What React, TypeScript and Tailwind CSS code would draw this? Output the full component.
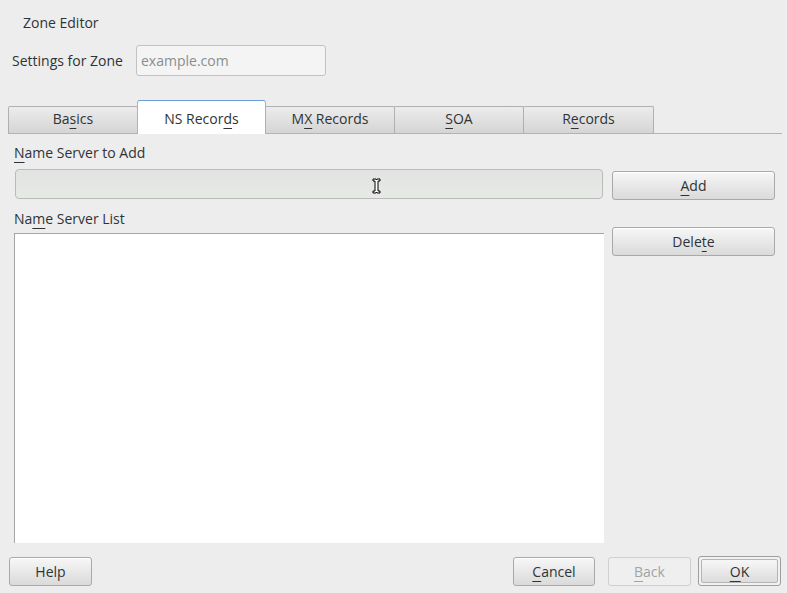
import React from "react";

const btn =
  "flex items-center justify-center rounded-[3px] border border-[#a9a9a9] bg-gradient-to-b from-[#f7f7f7] to-[#dadada] text-[14px] text-[#2e3436] shadow-[inset_0_1px_0_#ffffff]";

const Mn = ({ children }: { children: React.ReactNode }) => (
  <span className="underline decoration-1 underline-offset-[4px]">{children}</span>
);

const Tab = ({
  children,
  width,
  active,
}: {
  children: React.ReactNode;
  width: string;
  active?: boolean;
}) =>
  active ? (
    <div
      className={`${width} -mb-px -ml-px flex h-[34px] items-center justify-center rounded-t-[3px] border border-b-0 border-[#b0b0b0] border-t-[#6a9fd8] bg-white pt-[1px] text-[14px] text-[#2e3436]`}
    >
      <span>{children}</span>
    </div>
  ) : (
    <div
      className={`${width} -ml-px flex h-[27px] items-center justify-center rounded-t-[2px] border border-b-0 border-[#b0b0b0] bg-gradient-to-b from-[#ececec] to-[#d5d5d5] pb-[3px] text-[14px] text-[#2e3436] first:ml-0`}
    >
      <span>{children}</span>
    </div>
  );

const IBeam = () => (
  <svg width="9" height="16" viewBox="0 0 9 16" className="absolute left-[356px] top-[8px]">
    <path
      d="M1 1h3l0.5 1 0.5-1h3v2h-2v10h2v2h-3l-0.5-1-0.5 1h-3v-2h2v-10h-2z"
      fill="#ffffff"
      stroke="#000000"
      strokeWidth="1"
    />
  </svg>
);

export default function App() {
  return (
    <div
      className="flex h-[593px] w-[787px] flex-col overflow-hidden bg-[#ededed] text-[14px] text-[#2e3436]"
      style={{ fontFamily: '"Open Sans", "DejaVu Sans", sans-serif' }}
    >
      <div className="pl-[23px] pt-[13px] leading-[20px]">Zone Editor</div>

      <div className="mt-[12px] flex h-[31px] items-center pl-[12px]">
        <span className="w-[124px] leading-[20px]">Settings for Zone</span>
        <div className="flex h-[31px] w-[190px] items-center rounded-[3px] border border-[#c2c2c2] bg-[#f4f4f4] pl-[4px] text-[#8a8e8c]">
          example.com
        </div>
      </div>

      <div className="ml-[8px] mr-[5px] mt-[24px] flex h-[34px] items-end border-b border-[#b3b3b3]">
        <Tab width="w-[130px]">
          Ba<Mn>s</Mn>ics
        </Tab>
        <Tab width="w-[129px]" active>
          NS Recor<Mn>d</Mn>s
        </Tab>
        <Tab width="w-[130px]">
          M<Mn>X</Mn> Records
        </Tab>
        <Tab width="w-[130px]">
          <Mn>S</Mn>OA
        </Tab>
        <Tab width="w-[131px]">
          R<Mn>e</Mn>cords
        </Tab>
      </div>

      <div className="flex">
        <div className="ml-[14px] flex w-[590px] flex-col">
          <div className="mt-[9px] leading-[20px]">
            <Mn>N</Mn>ame Server to Add
          </div>
          <div className="relative ml-px mt-[6px] h-[30px] w-[588px] rounded-[4px] border border-[#b9bbb9] bg-gradient-to-b from-[#e2e4e2] to-[#e7e9e7]">
            <IBeam />
          </div>
          <div className="mt-[10px] leading-[20px]">
            Na<Mn>m</Mn>e Server List
          </div>
          <div className="mt-[4px] h-[310px] border-l border-t border-[#a6a6a6] bg-white" />
        </div>

        <div className="ml-[8px] flex w-[163px] flex-col">
          <div className={`${btn} mt-[37px] h-[29px]`}>
            <span>
              <Mn>A</Mn>dd
            </span>
          </div>
          <div className={`${btn} mt-[27px] h-[29px]`}>
            <span>
              Dele<Mn>t</Mn>e
            </span>
          </div>
        </div>
      </div>

      <div className="mt-[13px] flex h-[30px] items-center pl-[9px] pr-[6px]">
        <div className={`${btn} h-[29px] w-[83px]`}>Help</div>
        <div className="flex-1" />
        <div className={`${btn} h-[29px] w-[82px]`}>
          <span>
            <Mn>C</Mn>ancel
          </span>
        </div>
        <div className="ml-[13px] flex h-[29px] w-[83px] items-center justify-center rounded-[3px] border border-[#cfcfcf] bg-[#efefef] text-[#a2a4a4]">
          <span>
            <Mn>B</Mn>ack
          </span>
        </div>
        <div className="ml-[7px] flex h-[30px] w-[83px] items-center justify-center rounded-[3px] border border-[#9e9e9e] bg-[#f1f1f1] p-[2px]">
          <div className="flex h-full w-full items-center justify-center rounded-[2px] border border-[#b5b5b5] bg-gradient-to-b from-[#f7f7f7] to-[#dcdcdc] text-[#2e3436]">
            <span>
              <Mn>O</Mn>K
            </span>
          </div>
        </div>
      </div>
    </div>
  );
}
